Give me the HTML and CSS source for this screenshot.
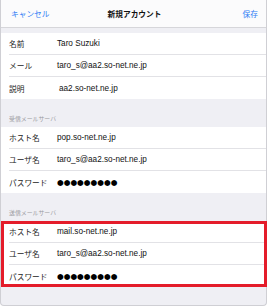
FILE: index.html
```html
<!DOCTYPE html>
<html lang="ja">
<head>
<meta charset="utf-8">
<title>新規アカウント</title>
<link rel="stylesheet" href="styles.css">
</head>
<body>
<div class="panel">
  <header class="nav">
    <span class="nav-btn">キャンセル</span>
    <span class="nav-title">新規アカウント</span>
    <span class="nav-btn right">保存</span>
  </header>
  <div class="gap"></div>
  <section class="group">
    <div class="row"><span class="label">名前</span><span class="value">Taro Suzuki</span></div>
    <div class="row"><span class="label">メール</span><span class="value">taro_s@aa2.so-net.ne.jp</span></div>
    <div class="row"><span class="label">説明</span><span class="value indent">aa2.so-net.ne.jp</span></div>
  </section>
  <div class="section-head">受信メールサーバ</div>
  <section class="group">
    <div class="row"><span class="label">ホスト名</span><span class="value">pop.so-net.ne.jp</span></div>
    <div class="row"><span class="label">ユーザ名</span><span class="value">taro_s@aa2.so-net.ne.jp</span></div>
    <div class="row"><span class="label">パスワード</span><span class="value dots">●●●●●●●●●</span></div>
  </section>
  <div class="section-head">送信メールサーバ</div>
  <section class="group highlighted">
    <div class="row"><span class="label">ホスト名</span><span class="value">mail.so-net.ne.jp</span></div>
    <div class="row"><span class="label">ユーザ名</span><span class="value">taro_s@aa2.so-net.ne.jp</span></div>
    <div class="row"><span class="label">パスワード</span><span class="value dots">●●●●●●●●●</span></div>
  </section>
  <div class="bottom"></div>
</div>
</body>
</html>
```
FILE: styles.css
```css
html, body {
  margin: 0;
  padding: 0;
  background: #ffffff;
}
body {
  width: 269px;
  height: 308px;
  overflow: hidden;
  font-family: "Liberation Sans", "Noto Sans CJK JP", sans-serif;
}
.panel {
  width: 267px;
  box-sizing: border-box;
  background: #efeff4;
  border: 1px solid #cfcfd4;
  border-top: none;
  border-radius: 0 0 4px 4px;
  display: flex;
  flex-direction: column;
}
.nav {
  height: 28px;
  box-sizing: border-box;
  background: #fbfbfc;
  border-bottom: 1px solid #d6d6da;
  display: grid;
  grid-template-columns: 1fr auto 1fr;
  align-items: center;
  padding: 0 8px 0 10px;
  font-family: "Noto Sans CJK JP", sans-serif;
  font-size: 7.7px;
}
.nav-btn {
  color: #2f7bf5;
}
.nav-btn.right {
  justify-self: end;
}
.nav-title {
  font-weight: bold;
  color: #111;
}
.gap {
  height: 5px;
}
.group {
  background: #fff;
  display: flex;
  flex-direction: column;
  padding-left: 8px;
}
.row {
  height: 22px;
  box-sizing: border-box;
  display: flex;
  align-items: center;
  border-bottom: 1px solid #e2e2e6;
}
.row:last-child {
  border-bottom: none;
}
.label {
  width: 48px;
  font-family: "Noto Sans CJK JP", sans-serif;
  font-size: 7.7px;
  color: #222;
}
.value {
  font-size: 8.2px;
  color: #111;
}
.value.indent {
  margin-left: 2px;
}
.dots {
  font-family: "DejaVu Sans", sans-serif;
  font-size: 7.7px;
  letter-spacing: 0;
  color: #000;
}
.section-head {
  height: 28px;
  box-sizing: border-box;
  display: flex;
  align-items: flex-end;
  padding: 0 0 4px 8px;
  font-family: "Noto Sans CJK JP", sans-serif;
  font-size: 5.9px;
  color: #9a9aa0;
}
.highlighted {
  position: relative;
}
.highlighted::after {
  content: "";
  position: absolute;
  left: 0;
  right: -1px;
  top: 0;
  bottom: 0;
  border: 3px solid #e41c2a;
  pointer-events: none;
}
.bottom {
  height: 18px;
}
```
